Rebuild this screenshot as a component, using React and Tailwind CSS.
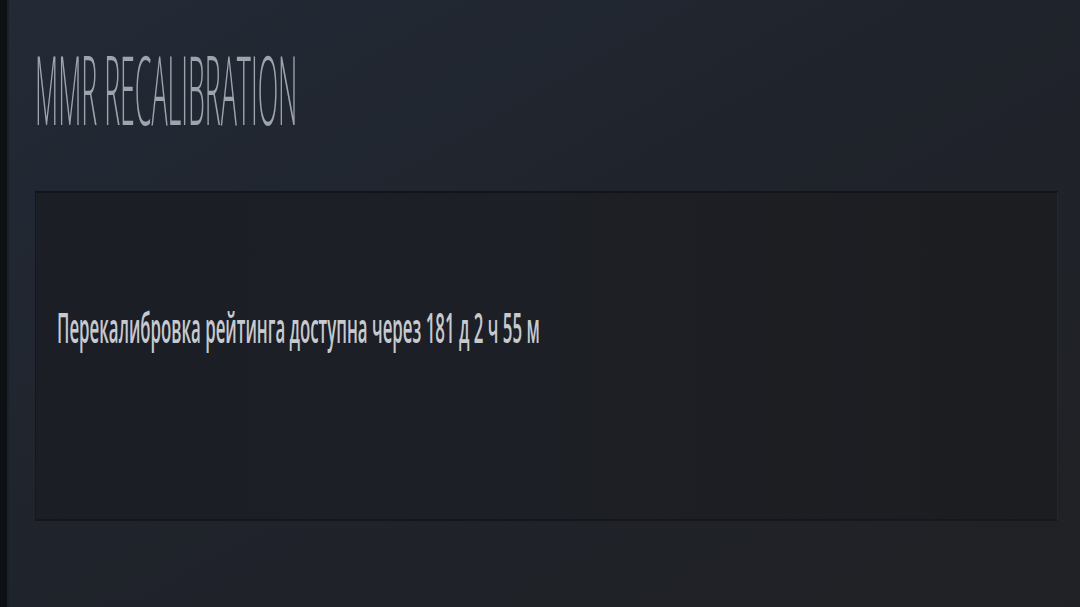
export default function App() {
  return (
    <div className="flex h-[607px] w-full overflow-hidden bg-[#1e2127]" style={{ fontFamily: '"Open Sans", "Noto Sans", sans-serif' }}>
      {/* left edge */}
      <div className="w-[7px] shrink-0 bg-[#0e1113]" />
      <div className="w-[2px] shrink-0 bg-[#1a2129]" />

      <div className="flex min-w-0 flex-1 flex-col bg-gradient-to-br from-[#232a36] via-[#1f232b] to-[#202124] pl-[26px] pr-[22px]">
        {/* Title */}
        <div className="mt-[41px] h-[95px] whitespace-nowrap">
          <h1 className="w-max origin-left scale-x-[0.282] text-[95px] font-light leading-none tracking-normal text-[#9ea4ac]">
            MMR RECALIBRATION
          </h1>
        </div>

        {/* Panel */}
        <div className="mt-[55px] h-[330px] min-w-0 border-t-2 border-l border-r border-b-2 border-t-[#11141a] border-l-[#14171d] border-r-[#26282d] border-b-[#15171c] bg-gradient-to-r from-[#1b1e25] via-[#1c1f25] to-[#1c1d20] pl-[21px] pt-[113px]">
          <p className="w-max origin-left scale-x-[0.401] whitespace-nowrap text-[42px] font-semibold leading-none text-[#c6cacf]">
            Перекалибровка рейтинга доступна через 181 д 2 ч 55 м
          </p>
        </div>
      </div>
    </div>
  );
}
